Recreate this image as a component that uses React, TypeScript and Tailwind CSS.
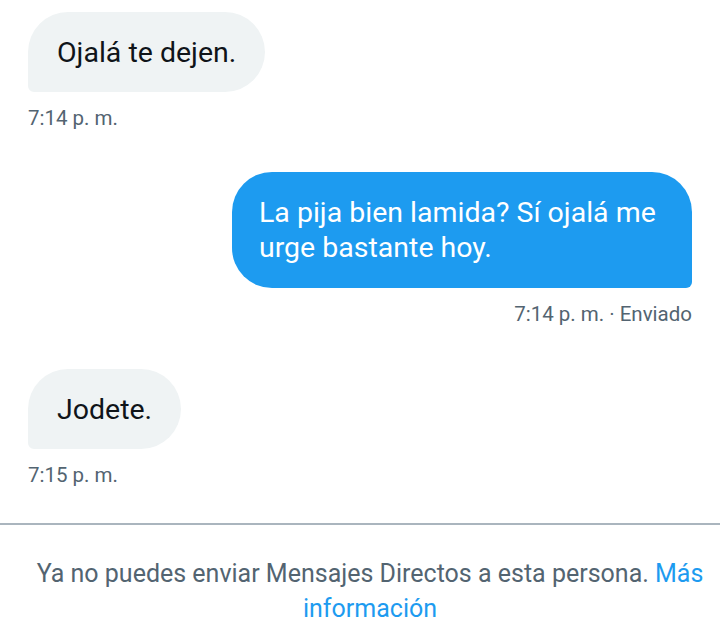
import React from 'react';

const font = { fontFamily: 'Roboto, "Noto Sans", sans-serif' };

const Received: React.FC<{ text: string; time: string }> = ({ text, time }) => (
  <div className="flex flex-col items-start">
    <div className="bg-[#eff3f4] text-[#0f1419] text-[28.5px] leading-[35px] px-[29px] py-[22.5px] rounded-[40px] rounded-bl-[6px]">
      {text}
    </div>
    <div className="mt-[14px] text-[20.5px] leading-[24px] text-[#536471]">{time}</div>
  </div>
);

const Sent: React.FC<{ text: string; time: string }> = ({ text, time }) => (
  <div className="flex flex-col items-end">
    <div className="bg-[#1d9bf0] text-white text-[28.5px] leading-[35px] px-[27px] py-[23px] rounded-[40px] rounded-br-[6px] max-w-[460px]">
      {text}
    </div>
    <div className="mt-[14px] text-[20.5px] leading-[24px] text-[#536471]">{time}</div>
  </div>
);

export default function App() {
  return (
    <div className="w-[720px] min-h-[636px] bg-white overflow-hidden flex flex-col" style={font}>
      <div className="px-[28px] pt-[12px] flex flex-col shrink-0">
        <Received text="Ojalá te dejen." time="7:14 p. m." />
        <div className="mt-[42px]">
          <Sent text="La pija bien lamida? Sí ojalá me urge bastante hoy." time="7:14 p. m. · Enviado" />
        </div>
        <div className="mt-[43px]">
          <Received text="Jodete." time="7:15 p. m." />
        </div>
      </div>
      <div className="mt-[36px] h-[2px] shrink-0 bg-[#aab5be]" />
      <p className="mt-[31px] pl-[24px] pr-[4px] shrink-0 text-center text-[25px] leading-[35px] text-[#536471]">
        Ya no puedes enviar Mensajes Directos a esta persona.{' '}
        <span className="text-[#1d9bf0]">Más información</span>
      </p>
    </div>
  );
}
